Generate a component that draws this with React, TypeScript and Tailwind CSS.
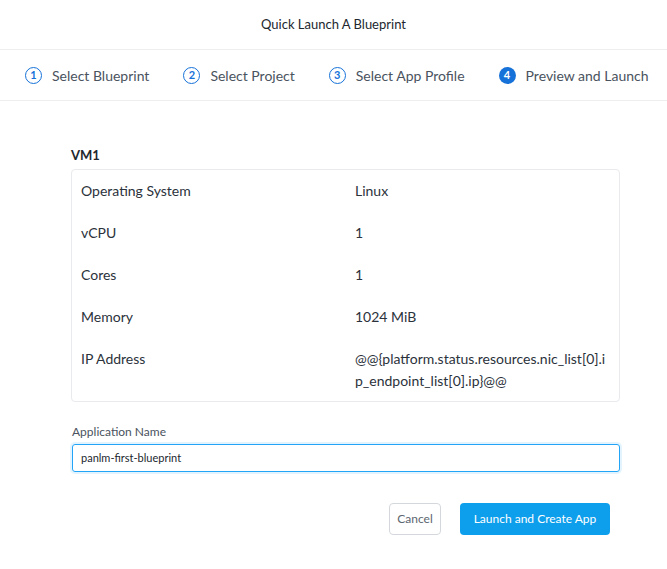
const steps = [
  { n: '1', label: 'Select Blueprint', active: false },
  { n: '2', label: 'Select Project', active: false },
  { n: '3', label: 'Select App Profile', active: false },
  { n: '4', label: 'Preview and Launch', active: true },
];

const rows = [
  { k: 'Operating System', v: 'Linux' },
  { k: 'vCPU', v: '1' },
  { k: 'Cores', v: '1' },
  { k: 'Memory', v: '1024 MiB' },
  { k: 'IP Address', v: '@@{platform.status.resources.nic_list[0].ip_endpoint_list[0].ip}@@' },
];

export default function App() {
  return (
    <div className="w-[667px] h-[569px] bg-white text-[#323a45] font-['Lato','Open_Sans',sans-serif] overflow-hidden">
      <div className="h-[50px] flex items-center justify-center border-b border-[#eceef0] text-[13px] text-[#22272e]">
        Quick Launch A Blueprint
      </div>

      <div className="h-[51px] flex items-center pl-[25px] gap-[34px] border-b border-[#eceef0]">
        {steps.map(s => (
          <div key={s.n} className="flex items-center gap-[10px]">
            {s.active ? (
              <span className="w-[17px] h-[17px] rounded-full bg-[#1672d9] text-white text-[11px] font-bold flex items-center justify-center">{s.n}</span>
            ) : (
              <span className="w-[17px] h-[17px] rounded-full border-[1.5px] border-[#1672d9] text-[#1672d9] text-[11px] font-bold flex items-center justify-center">{s.n}</span>
            )}
            <span className="text-[14px] text-[#4a535e]">{s.label}</span>
          </div>
        ))}
      </div>

      <div className="pl-[71px] w-[620px]">
        <div className="pt-[45px] text-[13px] font-bold text-[#22272e]">VM1</div>
        <div className="mt-[3px] border border-[#e8eaed] rounded-[4px] pt-[10px] pb-[9px] px-[9px] flex flex-col gap-[20px]">
          {rows.map(r => (
            <div key={r.k} className="grid grid-cols-[274px_254px] text-[14px] leading-[22px] text-[#2b323b]">
              <div>{r.k}</div>
              <div className="break-all">{r.v}</div>
            </div>
          ))}
        </div>

        <div className="mt-[21px] pl-[1px] text-[12px] text-[#4a535e]">Application Name</div>
        <input
          readOnly
          value="panlm-first-blueprint"
          className="block mt-[3px] ml-[1px] w-[548px] h-[28px] border border-[#22a5f7] rounded-[3px] px-[8px] text-[11px] text-[#22272e] outline-none shadow-[0_0_0_2px_rgba(34,165,247,0.12)]"
        />

        <div className="mt-[31px] flex justify-end gap-[19px] pr-[10px]">
          <button className="h-[32px] w-[52px] border border-[#d4d8dc] rounded-[4px] text-[12px] text-[#5c6670] bg-white">Cancel</button>
          <button className="h-[32px] w-[150px] rounded-[4px] text-[12px] text-white bg-[#0d9eec]">Launch and Create App</button>
        </div>
      </div>
    </div>
  );
}
